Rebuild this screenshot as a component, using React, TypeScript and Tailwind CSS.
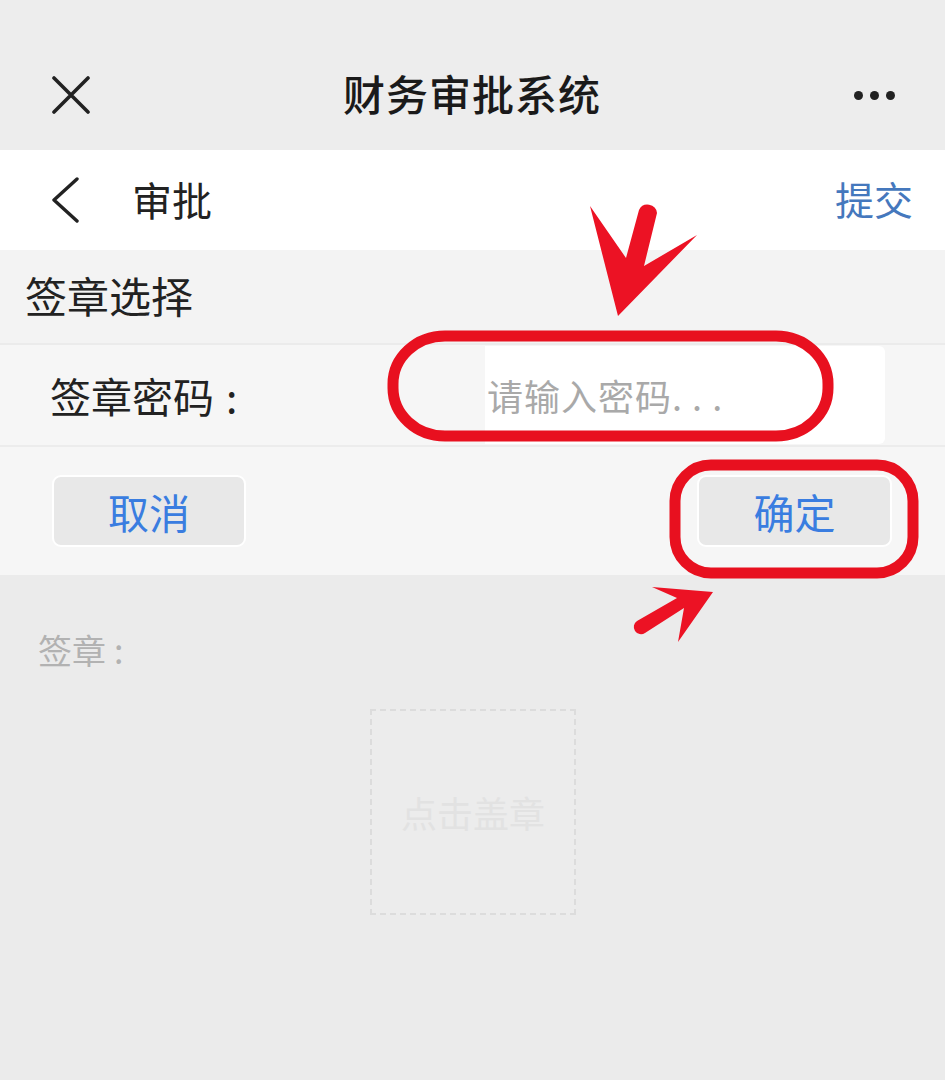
import React from "react";

export default function App() {
  return (
    <div
      className="relative w-[945px] h-[1080px] overflow-hidden bg-[#ebebeb] text-[#1f1f1f]"
      style={{ fontFamily: '"Noto Sans CJK SC", "Noto Sans", sans-serif' }}
    >
      {/* top nav */}
      <div className="h-[150px] bg-[#ededed] pt-[40px]">
        <div className="h-[110px] flex items-center justify-between pl-[52px] pr-[50px]">
          <svg width="38" height="38" viewBox="0 0 38 38">
            <path d="M2 2 L36 36 M36 2 L2 36" stroke="#222" strokeWidth="3.6" strokeLinecap="round" />
          </svg>
          <div className="text-[42px] font-medium leading-none tracking-[1px] text-[#1a1a1a] -mt-[4px]">财务审批系统</div>
          <div className="flex gap-[7px]">
            <span className="w-[9px] h-[9px] rounded-full bg-[#222]" />
            <span className="w-[9px] h-[9px] rounded-full bg-[#222]" />
            <span className="w-[9px] h-[9px] rounded-full bg-[#222]" />
          </div>
        </div>
      </div>

      {/* white bar */}
      <div className="h-[100px] bg-white flex items-center pl-[50px] pr-[32px]">
        <svg width="30" height="46" viewBox="0 0 30 46">
          <path d="M27 2 L4 23 L27 44" stroke="#222" strokeWidth="3.4" fill="none" strokeLinecap="round" strokeLinejoin="round" />
        </svg>
        <div className="ml-[52px] text-[40px] leading-none text-[#222] -mt-[3px]">审批</div>
        <div className="ml-auto text-[39px] leading-none text-[#4578bd] -mt-[3px]">提交</div>
      </div>

      {/* section header */}
      <div className="h-[95px] bg-[#f3f3f3] flex items-center pl-[25px] border-b-2 border-[#ebebeb]">
        <div className="text-[42px] leading-none text-[#222] -mt-[3px]">签章选择</div>
      </div>

      {/* password row */}
      <div className="h-[102px] bg-[#f6f6f6] flex items-center pl-[50px] pr-[60px] border-b-2 border-[#ececec]">
        <div className="text-[41px] leading-none text-[#222] flex">
          <span>签章密码</span>
          <span className="ml-[12px]">:</span>
        </div>
        <div className="ml-auto w-[400px] h-[98px] bg-white rounded-r-[6px] flex items-center pl-[2px]">
          <span className="text-[36px] leading-none text-[#a9a9a9] tracking-[1px]">请输入密码. . .</span>
        </div>
      </div>

      {/* buttons row */}
      <div className="h-[128px] bg-[#f6f6f6] flex items-center justify-between pl-[52px] pr-[53px]">
        <div className="w-[194px] h-[72px] rounded-[9px] bg-[#e8e8e8] border-2 border-white flex items-center justify-center text-[41px] leading-none text-[#3a7de0]">
          取消
        </div>
        <div className="w-[195px] h-[72px] rounded-[9px] bg-[#e8e8e8] border-2 border-white flex items-center justify-center text-[41px] leading-none text-[#3a7de0]">
          确定
        </div>
      </div>

      {/* lower area */}
      <div className="pl-[38px] pt-[58px]">
        <div className="text-[34px] leading-none text-[#b2b2b2] flex">
          <span>签章</span>
          <span className="ml-[8px]">:</span>
        </div>
      </div>
      <div className="mt-[42px] ml-[370px] w-[206px] h-[206px] border-2 border-dashed border-[#dcdcdc] bg-[#ececec] flex items-center justify-center">
        <span className="text-[36px] leading-none text-[#e2e2e2]">点击盖章</span>
      </div>

      {/* red annotations overlay */}
      <svg className="absolute inset-0 pointer-events-none" width="945" height="1080" viewBox="0 0 945 1080">
        <rect x="393" y="336" width="435" height="100" rx="52" ry="48" fill="none" stroke="#e8101f" strokeWidth="11" />
        <rect x="675" y="465" width="238" height="108" rx="36" ry="36" fill="none" stroke="#e8101f" strokeWidth="11" />
        <path
          d="M590,206 L626,258 L639,210 A9.5,9.5 0 0 1 657,213 L644,266 L697,235 L618,316 Z"
          fill="#ec1224"
        />
        <path
          d="M652,587 L713,592 L678,642 L684,608 L645,633 A6.5,6.5 0 0 1 637,621 L677,598 Z"
          fill="#ec1224"
        />
      </svg>
    </div>
  );
}
